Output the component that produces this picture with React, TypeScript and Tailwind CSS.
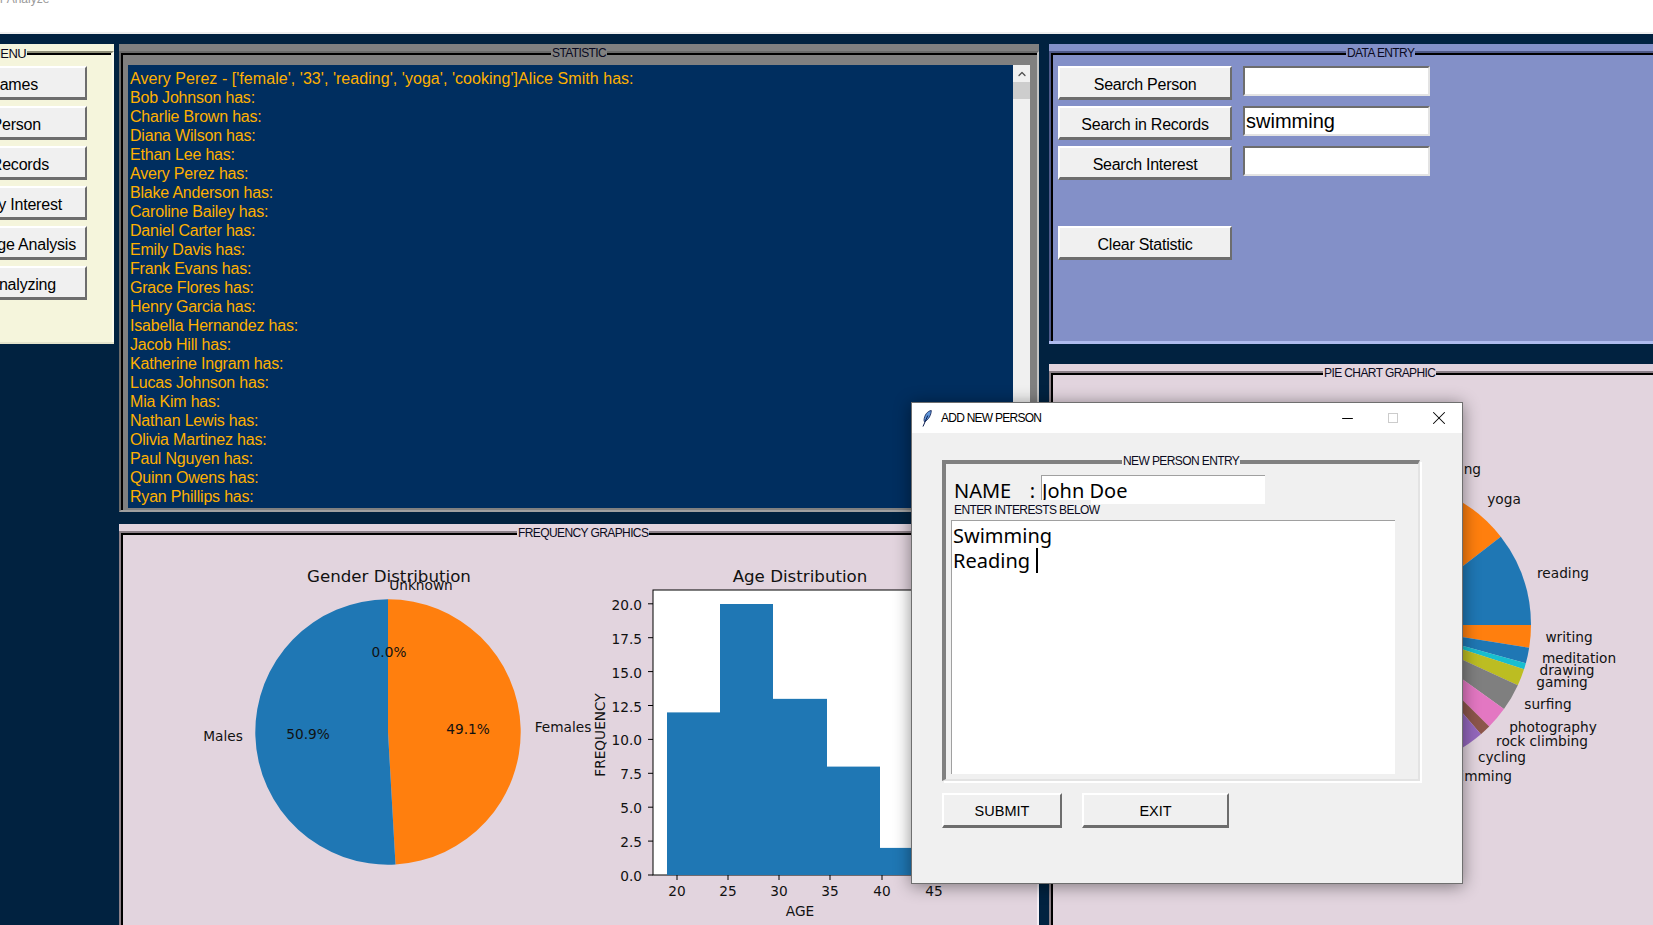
import { ChevronUp, Minus, X } from "lucide-react";
import type { ReactNode } from "react";

const statLines = [
  "Bob Johnson has:",
  "Charlie Brown has:",
  "Diana Wilson has:",
  "Ethan Lee has:",
  "Avery Perez has:",
  "Blake Anderson has:",
  "Caroline Bailey has:",
  "Daniel Carter has:",
  "Emily Davis has:",
  "Frank Evans has:",
  "Grace Flores has:",
  "Henry Garcia has:",
  "Isabella Hernandez has:",
  "Jacob Hill has:",
  "Katherine Ingram has:",
  "Lucas Johnson has:",
  "Mia Kim has:",
  "Nathan Lewis has:",
  "Olivia Martinez has:",
  "Paul Nguyen has:",
  "Quinn Owens has:",
  "Ryan Phillips has:",
];

const menuItems = [
  { label: "ames", pad: "pr-[47px]" },
  { label: "Person", pad: "pr-[44px]" },
  { label: "Records", pad: "pr-[36px]" },
  { label: "y Interest", pad: "pr-[23px]" },
  { label: "ge Analysis", pad: "pr-[9px]" },
  { label: "nalyzing", pad: "pr-[29px]" },
];

// angles in degrees, clockwise from 3 o'clock
const slice = (cx: number, cy: number, r: number, a0: number, a1: number) => {
  const p = (a: number) => [cx + r * Math.cos((a * Math.PI) / 180), cy + r * Math.sin((a * Math.PI) / 180)];
  const [x0, y0] = p(a0);
  const [x1, y1] = p(a1);
  return `M${cx} ${cy}L${x0} ${y0}A${r} ${r} 0 ${a1 - a0 > 180 ? 1 : 0} 1 ${x1} ${y1}Z`;
};

const interestSlices = [
  { from: -90, to: -37.8, color: "#ff7f0e" },
  { from: -37.8, to: 0, color: "#1f77b4" },
  { from: 0, to: 9.1, color: "#ff7f0e" },
  { from: 9.1, to: 15.4, color: "#1f77b4" },
  { from: 15.4, to: 17.9, color: "#17becf" },
  { from: 17.9, to: 24.7, color: "#bcbd22" },
  { from: 24.7, to: 35.7, color: "#7f7f7f" },
  { from: 35.7, to: 44.8, color: "#e377c2" },
  { from: 44.8, to: 49.3, color: "#8c564b" },
  { from: 49.3, to: 80, color: "#9467bd" },
];

const interestLabels = [
  { text: "yoga", x: 1504, y: 499 },
  { text: "reading", x: 1563, y: 573 },
  { text: "writing", x: 1569, y: 637 },
  { text: "meditation", x: 1579, y: 658 },
  { text: "drawing", x: 1567, y: 670 },
  { text: "gaming", x: 1562, y: 682 },
  { text: "surfing", x: 1548, y: 704 },
  { text: "photography", x: 1553, y: 727 },
  { text: "rock climbing", x: 1542, y: 741 },
  { text: "cycling", x: 1502, y: 757 },
];

const bars = [
  { x: 667, w: 53, v: 12 },
  { x: 720, w: 53, v: 20 },
  { x: 773, w: 54, v: 13 },
  { x: 827, w: 53, v: 8 },
  { x: 880, w: 53, v: 2 },
];

const xTicks = [
  { v: "20", x: 677 },
  { v: "25", x: 728 },
  { v: "30", x: 779 },
  { v: "35", x: 830 },
  { v: "40", x: 882 },
  { v: "45", x: 934 },
];

const yTicks = ["0.0", "2.5", "5.0", "7.5", "10.0", "12.5", "15.0", "17.5", "20.0"];

const RaisedButton = ({ children, className }: { children: ReactNode; className?: string }) => (
  <div
    className={`flex shrink-0 items-center bg-[#f0f0f0] border-2 border-t-white border-l-white border-r-[#6d6d6d] border-b-[3px] border-b-[#6d6d6d] pt-[4px] text-black ${className}`}
  >
    {children}
  </div>
);

const Entry = ({ value }: { value?: string }) => (
  <div className="flex h-[30px] w-[187px] items-center overflow-hidden bg-white border-2 border-t-[#6d6d6d] border-l-[#6d6d6d] border-r-[#e3e3e3] border-b-[#e3e3e3] pl-[1px] text-[20px] text-black">
    {value}
  </div>
);

const FrameLabel = ({ children, className }: { children: ReactNode; className: string }) => (
  <span className={`absolute top-[-8px] whitespace-nowrap px-[1px] text-[12px] leading-[17px] tracking-[-0.6px] text-[#0a0a20] ${className}`}>
    {children}
  </span>
);

const App = () => {
  return (
    <div className="relative h-[925px] w-[1653px] overflow-hidden bg-[#012240] font-['Liberation_Sans',Arial,sans-serif]">
      {/* main window title bar, cut off at the top */}
      <div className="h-[34px] overflow-hidden border-b-2 border-[#f0f0f0] bg-white">
        <div className="-mt-[8px] text-[12px] leading-[15px] text-[#9a9a9a]">r Analyze</div>
      </div>

      <div className="flex pt-[10px]">
        {/* menu */}
        <div className="h-[300px] w-[114px] shrink-0 border-b-2 border-[#e4e4cc] bg-[#f5f5dc] pt-[7px]">
          <div className="relative h-full border-t-2 border-r-2 border-[#8e8e78] border-r-[#fbfbee] pr-[1px]">
            <div className="h-full border-t-2 border-black pt-[11px]">
              <FrameLabel className="right-[85px] bg-[#f5f5dc] text-[13px]">MENU</FrameLabel>
              <div className="flex flex-col gap-[6px]">
                {menuItems.map((item) => (
                  <RaisedButton
                    key={item.label}
                    className={`h-[34px] w-[87px] justify-end overflow-hidden whitespace-nowrap border-l-0 text-[16px] tracking-[-0.2px] ${item.pad}`}
                  >
                    {item.label}
                  </RaisedButton>
                ))}
              </div>
            </div>
          </div>
        </div>

        {/* statistic + frequency graphics */}
        <div className="ml-[5px] flex w-[920px] shrink-0 flex-col gap-[12px]">
          <div className="h-[468px] bg-[#808080] pt-[7px]">
            <div className="relative h-full border-2 border-t-[#6a6a6a] border-l-[#6a6a6a] border-r-[#c4c4c4] border-b-[#a0a0a0]">
              <FrameLabel className="left-[430px] bg-[#808080]">STATISTIC</FrameLabel>
              <div className="h-full border-t-2 border-l-2 border-black pt-[10px] pr-[7px] pb-[2px] pl-[5px]">
                <div className="flex h-full">
                  <div className="min-w-0 flex-1 overflow-hidden bg-[#002e5f] pt-[4px] pl-[2px] text-[16px] leading-[19px] tracking-[-0.2px] text-[#ffb000]">
                    <div className="whitespace-nowrap tracking-[0.05px]">
                      Avery Perez - ['female', '33', 'reading', 'yoga', 'cooking']Alice Smith has:
                    </div>
                    {statLines.map((line, i) => (
                      <div key={i} className="whitespace-nowrap">
                        {line}
                      </div>
                    ))}
                  </div>
                  <div className="w-[17px] shrink-0 bg-[#f0f0f0]">
                    <div className="flex h-[17px] items-center justify-center">
                      <ChevronUp size={12} strokeWidth={2.5} className="text-[#505050]" />
                    </div>
                    <div className="h-[17px] bg-[#cdcdcd]" />
                  </div>
                </div>
              </div>
            </div>
          </div>

          <div className="h-[440px] bg-[#e2d4de] pt-[7px]">
            <div className="relative h-full border-2 border-t-[#8c8088] border-l-[#8c8088] border-r-[#f6eef4] border-b-0">
              <FrameLabel className="left-[396px] bg-[#e2d4de]">FREQUENCY GRAPHICS</FrameLabel>
              <div className="h-full border-t-2 border-l-2 border-black">
                <svg viewBox="123 535 912 390" className="block h-[390px] w-[912px] font-['DejaVu_Sans',sans-serif]">
                  {/* gender pie */}
                  <path d={slice(388, 732, 132.7, -90, 86.76)} fill="#ff7f0e" />
                  <path d={slice(388, 732, 132.7, 86.76, 270)} fill="#1f77b4" />
                  <g textAnchor="middle" dominantBaseline="central" fontSize="13.7" fill="#111">
                    <text x="389" y="576" fontSize="16.67">Gender Distribution</text>
                    <text x="421" y="585">Unknown</text>
                    <text x="389" y="652">0.0%</text>
                    <text x="223" y="736">Males</text>
                    <text x="308" y="734">50.9%</text>
                    <text x="468" y="729">49.1%</text>
                    <text x="563" y="727">Females</text>
                    <text x="0" y="0" transform="translate(600 735) rotate(-90)">FREQUENCY</text>
                  </g>

                  {/* age histogram */}
                  <rect x="653" y="590" width="330" height="285" fill="#fff" stroke="#000" strokeWidth="1" />
                  {bars.map((b) => (
                    <rect key={b.x} x={b.x} y={875 - b.v * 13.55} width={b.w} height={b.v * 13.55} fill="#1f77b4" />
                  ))}
                  {yTicks.map((t, i) => (
                    <g key={t}>
                      <line x1="648" x2="653" y1={875 - i * 33.9} y2={875 - i * 33.9} stroke="#000" />
                      <text x="642" y={876 - i * 33.9} textAnchor="end" dominantBaseline="central" fontSize="13.7" fill="#111">
                        {t}
                      </text>
                    </g>
                  ))}
                  {xTicks.map((t) => (
                    <g key={t.v}>
                      <line x1={t.x} x2={t.x} y1="875" y2="880" stroke="#000" />
                      <text x={t.x} y="891" textAnchor="middle" dominantBaseline="central" fontSize="13.7" fill="#111">
                        {t.v}
                      </text>
                    </g>
                  ))}
                  <text x="800" y="576" textAnchor="middle" dominantBaseline="central" fontSize="16.67" fill="#111">
                    Age Distribution
                  </text>
                  <text x="800" y="911" textAnchor="middle" dominantBaseline="central" fontSize="13.7" fill="#111">
                    AGE
                  </text>
                </svg>
              </div>
            </div>
          </div>
        </div>

        {/* data entry + pie chart */}
        <div className="ml-[10px] flex w-[604px] shrink-0 flex-col gap-[20px]">
          <div className="h-[300px] border-b-[3px] border-[#aebbee] bg-[#8390c8] pt-[7px]">
            <div className="relative h-full border-t-2 border-l-2 border-[#4f5a8a]">
              <FrameLabel className="left-[295px] bg-[#8390c8]">DATA ENTRY</FrameLabel>
              <div className="h-full border-t-2 border-l-2 border-black pt-[11px] pl-[5px]">
                <div className="flex flex-col gap-[6px]">
                  {[
                    { label: "Search Person", value: "" },
                    { label: "Search in Records", value: "swimming" },
                    { label: "Search Interest", value: "" },
                  ].map((row) => (
                    <div key={row.label} className="flex items-start gap-[11px]">
                      <RaisedButton className="h-[34px] w-[174px] justify-center text-[16px] tracking-[-0.25px]">
                        {row.label}
                      </RaisedButton>
                      <Entry value={row.value} />
                    </div>
                  ))}
                </div>
                <RaisedButton className="mt-[46px] h-[34px] w-[174px] justify-center text-[16px] tracking-[-0.25px]">
                  Clear Statistic
                </RaisedButton>
              </div>
            </div>
          </div>

          <div className="h-[580px] bg-[#e2d4de] pt-[7px]">
            <div className="relative h-full border-t-2 border-l-2 border-[#8c8088]">
              <FrameLabel className="left-[272px] bg-[#e2d4de]">PIE CHART GRAPHIC</FrameLabel>
              <div className="h-full border-t-2 border-l-2 border-black">
                <svg viewBox="1053 375 600 550" className="block h-[550px] w-[600px] font-['DejaVu_Sans',sans-serif]">
                  {interestSlices.map((s) => (
                    <path key={s.from} d={slice(1387, 625, 144, s.from, s.to)} fill={s.color} />
                  ))}
                  <g textAnchor="middle" dominantBaseline="central" fontSize="13.7" fill="#111">
                    {interestLabels.map((l) => (
                      <text key={l.text} x={l.x} y={l.y}>
                        {l.text}
                      </text>
                    ))}
                    <text x="1481" y="469" textAnchor="end">cooking</text>
                    <text x="1512" y="776" textAnchor="end">swimming</text>
                  </g>
                </svg>
              </div>
            </div>
          </div>
        </div>
      </div>

      {/* floating dialog window */}
      <div className="absolute left-[911px] top-[402px] h-[482px] w-[552px] border border-[#6f6f6f] bg-[#f0f0f0] shadow-[0_2px_16px_rgba(0,0,0,0.45)]">
        <div className="flex h-[30px] items-center bg-white pl-[10px]">
          <svg viewBox="0 0 10 17" className="h-[17px] w-[10px]">
            <path d="M9.3.5C5.5 1 2.3 5 2 10.3l.4 1.4C6.5 10 9.2 5 9.3.5z" fill="#5f95d8" stroke="#0b1c4f" strokeWidth=".8" />
            <path d="M5.8 5.5 1 16.5" stroke="#0b1c4f" strokeWidth="1" fill="none" />
          </svg>
          <span className="ml-[9px] text-[12px] tracking-[-0.75px] text-black">ADD NEW PERSON</span>
          <div className="ml-auto flex items-center text-black">
            <Minus size={17} strokeWidth={1.4} className="mr-[32px]" />
            <div className="mr-[30px] h-[10px] w-[10px] border border-[#cccccc]" />
            <X size={22} strokeWidth={1.1} className="mr-[12px]" />
          </div>
        </div>

        <div className="pt-[27px] pl-[30px]">
          <div className="relative h-[321px] w-[478px] border-t-4 border-l-4 border-r-2 border-b-2 border-t-[#808080] border-l-[#808080] border-r-[#e3e3e3] border-b-[#e3e3e3] shadow-[2px_2px_0_#ffffff]">
            <FrameLabel className="left-[176px] top-[-11px] bg-[#f0f0f0]">NEW PERSON ENTRY</FrameLabel>
            <div className="flex items-start pt-[11px] pl-[8px]">
              <span className="mt-[2px] w-[87px] whitespace-pre font-['Noto_Sans',sans-serif] text-[20px] leading-[27px] text-black [word-spacing:1px]">NAME   :</span>
              <div className="h-[29px] w-[224px] overflow-hidden border-t border-l border-[#a0a0a0] bg-white pt-[1px] font-['Noto_Sans',sans-serif] text-[20px] leading-[27px] text-black">
                John Doe
              </div>
            </div>
            <div className="relative -mt-[4px] ml-[4px] h-[20px] w-[141px] whitespace-nowrap bg-[#f0f0f0] pl-[4px] text-[12px] leading-[21px] tracking-[-0.6px] text-[#0a0a20]">
              ENTER INTERESTS BELOW
            </div>
            <div className="ml-[5px] h-[254px] w-[444px] border-t border-l border-[#a0a0a0] bg-white pl-[1px] pt-[2px] font-['Noto_Sans',sans-serif] text-[20px] leading-[25px] text-black">
              <div>Swimming</div>
              <div className="flex items-center">
                Reading
                <span className="ml-[6px] h-[25px] w-[2px] bg-black" />
              </div>
            </div>
          </div>
          <div className="mt-[12px] flex gap-[20px]">
            <RaisedButton className="h-[35px] w-[120px] justify-center text-[14.5px]">SUBMIT</RaisedButton>
            <RaisedButton className="h-[35px] w-[147px] justify-center text-[14.5px]">EXIT</RaisedButton>
          </div>
        </div>
      </div>
    </div>
  );
};

export default App;
